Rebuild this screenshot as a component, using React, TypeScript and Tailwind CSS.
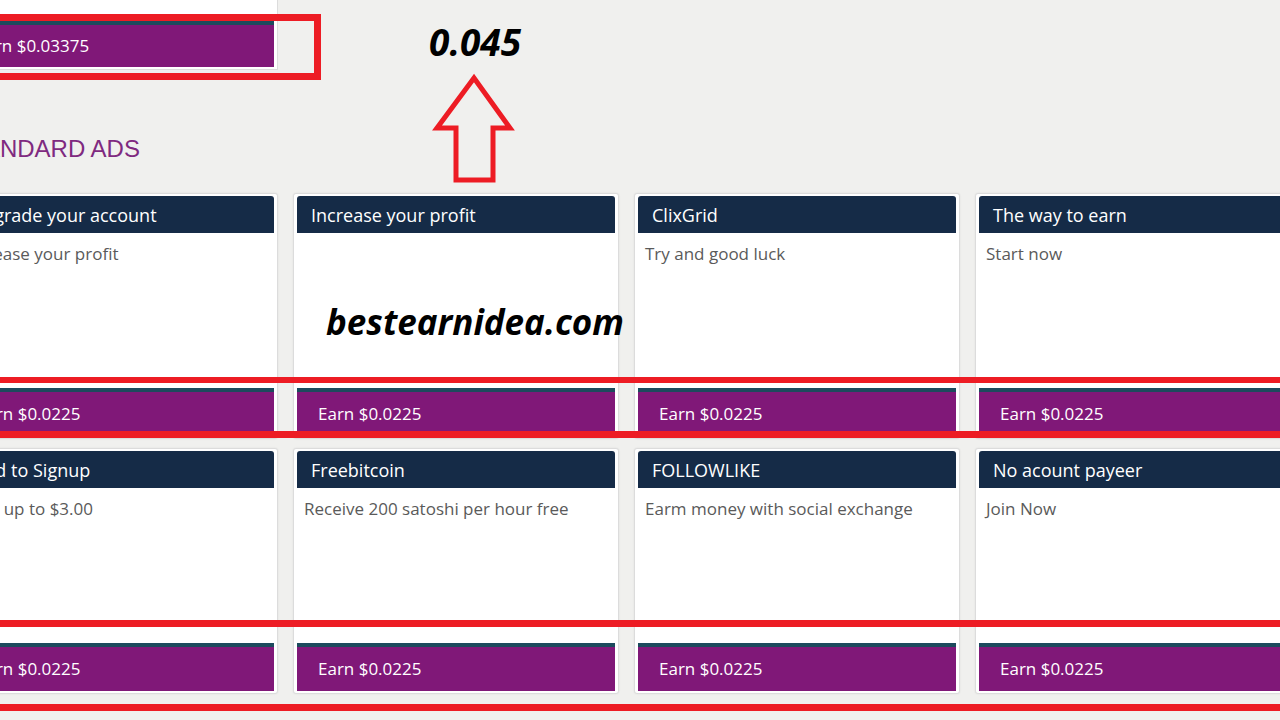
import React from "react";

type Ad = { title: string; body: string };

const rows: Ad[][] = [
  [
    { title: "Upgrade your account", body: "Increase your profit" },
    { title: "Increase your profit", body: "" },
    { title: "ClixGrid", body: "Try and good luck" },
    { title: "The way to earn", body: "Start now" },
  ],
  [
    { title: "Paid to Signup", body: "Earn up to $3.00" },
    { title: "Freebitcoin", body: "Receive 200 satoshi per hour free" },
    { title: "FOLLOWLIKE", body: "Earm money with social exchange" },
    { title: "No acount payeer", body: "Join Now" },
  ],
];

function AdCard({ ad }: { ad: Ad }) {
  return (
    <div className="flex h-[246px] w-[326px] flex-col rounded-[3px] border border-[#dcdcdc] bg-white px-[3px] pb-[2px] pt-[2px] shadow-[0_0_2px_rgba(0,0,0,0.08)]">
      <div className="flex h-[37px] items-center rounded-t-[3px] bg-[#152b47] pl-[14px] pt-[1px] text-[18px] text-white">
        {ad.title}
      </div>
      <div className="h-[155px] px-[7px] pt-[9px] text-[17px] leading-[24px] text-[#5a5a5a]">
        {ad.body}
      </div>
      <div className="h-[4px] bg-[#1c4a5d]" />
      <div className="flex h-[44px] items-center bg-[#801878] pl-[21px] text-[17px] text-white">
        Earn $0.0225
      </div>
    </div>
  );
}

export default function App() {
  return (
    <div
      className="relative h-[720px] w-[1280px] overflow-hidden bg-[#f0f0ee]"
      style={{ fontFamily: '"Open Sans", "Noto Sans", sans-serif' }}
    >
      <div className="ml-[-48px] flex flex-col">
        {/* partially visible top card */}
        <div className="flex w-[326px] flex-col border-b border-r border-[#dcdcdc] bg-white px-[3px] pb-[2px]">
          <div className="h-[21px]" />
          <div className="h-[4px] bg-[#1c4a5d]" />
          <div className="flex h-[42px] items-center bg-[#801878] pl-[21px] text-[17px] text-white">
            Earn $0.03375
          </div>
        </div>

        <h2
          className="ml-[3px] mt-[65px] text-[24px] leading-[28px] text-[#7f2a80]"
          style={{ fontFamily: '"Liberation Sans", Arial, sans-serif' }}
        >
          STANDARD ADS
        </h2>

        <div className="mt-[30px] flex flex-col gap-[9px]">
          {rows.map((row, i) => (
            <div key={i} className="flex gap-[15px]">
              {row.map((ad, j) => (
                <div key={j} className="shrink-0">
                  <AdCard ad={ad} />
                </div>
              ))}
            </div>
          ))}
        </div>
      </div>

      {/* annotations drawn over the page */}
      <div className="pointer-events-none absolute left-[-10px] top-[14px] h-[66px] w-[331px] border-[7px] border-[#ed1c24]" />
      <div className="pointer-events-none absolute left-0 top-[377px] h-[6px] w-[1280px] bg-[#ed1c24]" />
      <div className="pointer-events-none absolute left-0 top-[431px] h-[7px] w-[1280px] bg-[#ed1c24]" />
      <div className="pointer-events-none absolute left-0 top-[620px] h-[7px] w-[1280px] bg-[#ed1c24]" />
      <div className="pointer-events-none absolute left-0 top-[704px] h-[7px] w-[1280px] bg-[#ed1c24]" />

      <div className="absolute left-[429px] top-[23px] text-[37px] font-bold italic leading-none text-black">
        0.045
      </div>

      <svg
        className="absolute left-0 top-0"
        width="1280"
        height="720"
        viewBox="0 0 1280 720"
      >
        <polygon
          points="474,78 437,128 456,128 456,180 493,180 493,128 510,128"
          fill="none"
          stroke="#ed1c24"
          strokeWidth="5"
          strokeLinejoin="miter"
        />
      </svg>

      <div className="absolute left-[326px] top-[304px] text-[35px] font-bold italic leading-none text-black">
        bestearnidea.com
      </div>
    </div>
  );
}
